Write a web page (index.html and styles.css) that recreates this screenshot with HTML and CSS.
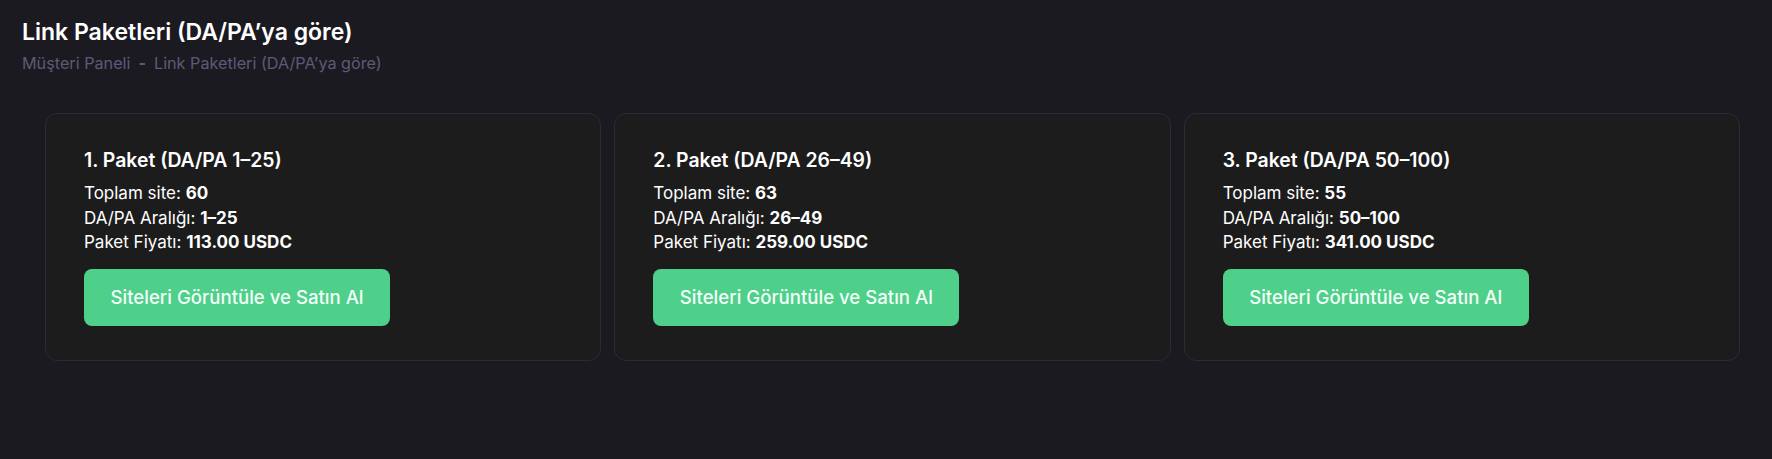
FILE: index.html
```html
<!DOCTYPE html>
<html lang="tr">
<head>
<meta charset="utf-8">
<title>Link Paketleri</title>
<link rel="stylesheet" href="styles.css">
</head>
<body>
<header class="page-head">
  <h1 class="page-title">Link Paketleri (DA/PA’ya göre)</h1>
  <nav class="crumbs"><span>Müşteri Paneli</span><span class="sep">-</span><span>Link Paketleri (DA/PA’ya göre)</span></nav>
</header>
<main class="packages">
  <section class="card">
    <h2 class="card-title">1. Paket (DA/PA 1–25)</h2>
    <p class="line">Toplam site: <b>60</b></p>
    <p class="line">DA/PA Aralığı: <b>1–25</b></p>
    <p class="line">Paket Fiyatı: <b>113.00 USDC</b></p>
    <a class="btn" href="#">Siteleri Görüntüle ve Satın Al</a>
  </section>
  <section class="card">
    <h2 class="card-title">2. Paket (DA/PA 26–49)</h2>
    <p class="line">Toplam site: <b>63</b></p>
    <p class="line">DA/PA Aralığı: <b>26–49</b></p>
    <p class="line">Paket Fiyatı: <b>259.00 USDC</b></p>
    <a class="btn" href="#">Siteleri Görüntüle ve Satın Al</a>
  </section>
  <section class="card">
    <h2 class="card-title">3. Paket (DA/PA 50–100)</h2>
    <p class="line">Toplam site: <b>55</b></p>
    <p class="line">DA/PA Aralığı: <b>50–100</b></p>
    <p class="line">Paket Fiyatı: <b>341.00 USDC</b></p>
    <a class="btn" href="#">Siteleri Görüntüle ve Satın Al</a>
  </section>
</main>
</body>
</html>
```

FILE: styles.css
```css
html, body {
  margin: 0;
  background: #1b1a21;
  font-family: Inter, "Noto Sans", sans-serif;
  color: #ffffff;
}
.page-head {
  padding: 18px 22px 0 22px;
}
.page-title {
  margin: 0;
  font-size: 23px;
  line-height: 28px;
  font-weight: 600;
  color: #ffffff;
}
.crumbs {
  margin-top: 6px;
  font-size: 16.2px;
  line-height: 22px;
  color: #5b5a78;
  display: flex;
  gap: 8px;
}
.crumbs .sep {
  font-weight: 700;
}
.packages {
  display: grid;
  grid-template-columns: repeat(3, 1fr);
  gap: 13px;
  margin: 39px 32px 0 45px;
}
.card {
  background: #1c1c1c;
  border: 1px solid #2b2a38;
  border-radius: 12px;
  padding: 34px 38px 34px;
}
.card-title {
  margin: 0 0 9px;
  font-size: 19.4px;
  line-height: 24px;
  font-weight: 600;
}
.line {
  margin: 0;
  font-size: 17px;
  line-height: 24.7px;
}
.line b {
  font-weight: 700;
}
.btn {
  display: inline-block;
  margin-top: 14px;
  background: #4ecf8a;
  color: #f2fff7;
  text-decoration: none;
  font-size: 18.6px;
  line-height: 57px;
  padding: 0 26.5px;
  border-radius: 8px;
  font-weight: 500;
}
```
